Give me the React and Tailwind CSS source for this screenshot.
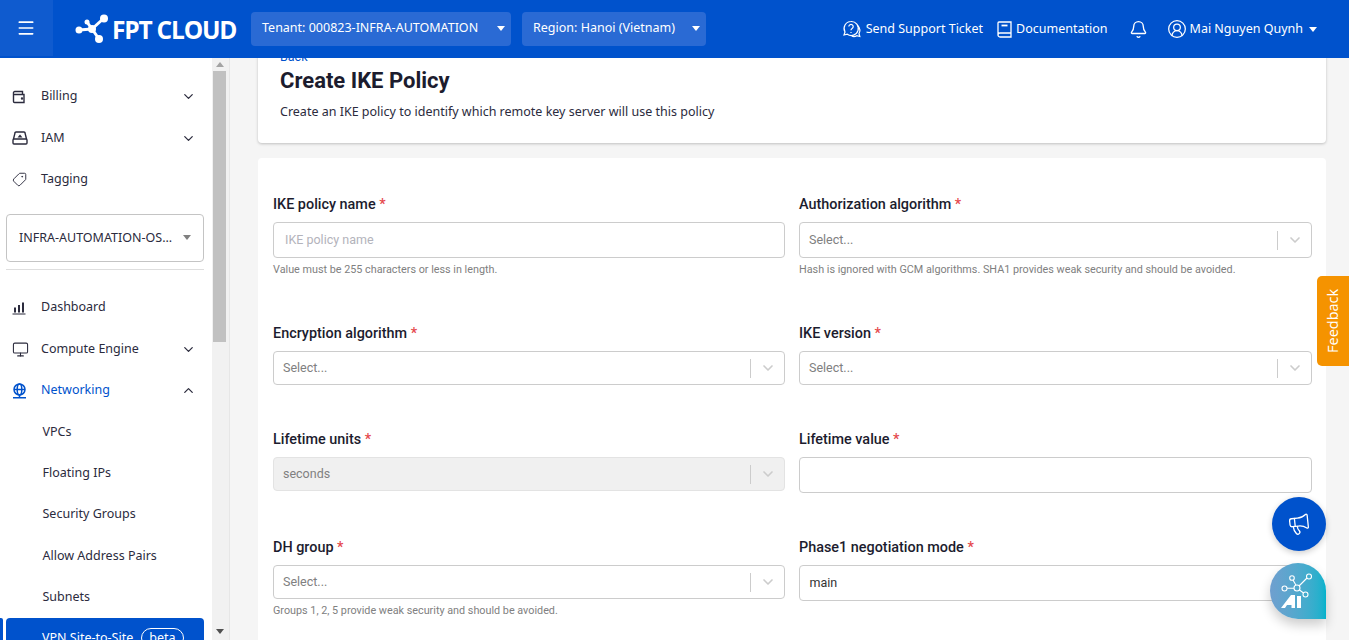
import React from 'react';
import { ChevronDown, ChevronUp, Tag, Monitor, Bell, CircleUserRound, Menu, Megaphone } from 'lucide-react';

const Logo = () => (
  <svg width="34" height="30" viewBox="0 0 34 30" fill="none" className="shrink-0">
    <g stroke="#fff" strokeWidth="3">
      <path d="M17 15 L28 5" />
      <path d="M17 15 L24 25" />
      <path d="M4 16 L17 15" />
      <path d="M17 15 L12 8" />
    </g>
    <circle cx="17" cy="15" r="4" fill="#fff" />
    <circle cx="29" cy="4.500" r="4" fill="#fff" />
    <circle cx="24" cy="25" r="4" fill="#fff" />
    <circle cx="4" cy="16" r="3.500" fill="#fff" />
    <circle cx="12" cy="8" r="2.500" fill="#fff" />
  </svg>
);

const Caret = ({ className = 'border-t-white' }) => (
  <span className={`w-0 h-0 border-x-[4px] border-x-transparent border-t-[5px] ${className}`} />
);

const WalletIcon = () => (
  <svg width="14" height="14" viewBox="0 0 14 14" fill="none" stroke="#2b2b3d" strokeWidth="1.400">
    <path d="M1.500 3.500V11.500a1 1 0 0 0 1 1h9.500V4.500H2.500a1 1 0 0 1-1-1Zm0 0a1.500 1.500 0 0 1 1.500-2h7.500v3" />
    <circle cx="10" cy="8.500" r=".5" fill="#2b2b3d" />
  </svg>
);

const DriveIcon = () => (
  <svg width="16" height="14" viewBox="0 0 16 14" fill="none" stroke="#2b2b3d" strokeWidth="1.400">
    <rect x="1" y="8" width="14" height="5" rx="1" />
    <path d="M1.500 8 3 2a1 1 0 0 1 1-1h8a1 1 0 0 1 1 1l1.500 6" />
    <path d="M5.500 6.500 8 3.500l2.500 3Z" fill="#2b2b3d" stroke="none" />
  </svg>
);

const ChartIcon = () => (
  <svg width="14" height="14" viewBox="0 0 14 14" fill="#2b2b3d">
    <rect x="2" y="6.500" width="2" height="5" />
    <rect x="6" y="4" width="2" height="7.500" />
    <rect x="10" y="1.500" width="2" height="10" />
    <rect x="0.500" y="12.500" width="13" height="1" />
  </svg>
);

const GlobeIcon = () => (
  <svg width="15" height="16" viewBox="0 0 15 16" fill="none" stroke="#0052cc" strokeWidth="1.500">
    <circle cx="7.500" cy="6.500" r="5.500" />
    <ellipse cx="7.500" cy="6.500" rx="2.300" ry="5.500" />
    <path d="M2 6.500h11M7.500 12v2.500M1 14.800h13" />
  </svg>
);

const TicketIcon = () => (
  <svg width="19" height="18" viewBox="0 0 19 18" fill="none" stroke="#fff" strokeWidth="1.200">
    <path d="M9 1.500a7 7 0 0 0-6 10.500l-1 3 3.300-.8A7 7 0 1 0 9 1.500Z" />
    <path d="M15.500 5.500a6.500 6.500 0 0 1 1.500 8l.8 3-3-.8a6 6 0 0 1-5 .500" />
    <path d="M6.800 6.500a2.200 2.200 0 1 1 3.300 2c-.8.500-1.100.9-1.100 1.800M9 12v1" />
  </svg>
);

const BookIcon = () => (
  <svg width="15" height="17" viewBox="0 0 15 17" fill="none" stroke="#fff" strokeWidth="1.300">
    <path d="M1 14V2a1 1 0 0 1 1-1h12v15H3a2 2 0 0 1-2-2Zm0 0a2 2 0 0 1 2-2h11" />
    <path d="M4.500 4.500h6" strokeWidth="1.800" />
  </svg>
);

const AiIcon = () => (
  <svg width="34" height="38" viewBox="0 0 34 38" fill="none">
    <g stroke="#fff" strokeWidth="1.100">
      <circle cx="16" cy="16" r="3" />
      <circle cx="11" cy="6" r="2.300" />
      <circle cx="28" cy="4.500" r="2.500" />
      <circle cx="3.500" cy="16.500" r="2.500" />
      <circle cx="24.500" cy="22.500" r="2.500" />
      <path d="M12 8l3 5.200M26 6l-8 8M6 16.300h7M18.500 18l4 3" />
    </g>
    <path d="M0 36 10 23h4v13h-3.500v-3H6l-2 3Z" fill="#fff" />
    <rect x="16" y="24" width="4" height="12" fill="#fff" />
  </svg>
);

const NavRow = ({ icon, label, chevron, active }) => (
  <div className="flex items-center h-[41.500px] pl-[12px] pr-[16px]">
    <span className="w-[29px] shrink-0 flex items-center">{icon}</span>
    <span className={`flex-1 text-[12.500px] ${active ? 'text-[#0052cc]' : 'text-[#2b2b3d]'}`}>{label}</span>
    {chevron === 'down' && <ChevronDown size={15} strokeWidth={2} className="text-[#2b2b3d]" />}
    {chevron === 'up' && <ChevronUp size={15} strokeWidth={2} className="text-[#2b2b3d]" />}
  </div>
);

const SubRow = ({ label }) => (
  <div className="flex items-center h-[41.300px] pl-[42.500px] text-[12.500px] text-[#2b2b3d]">{label}</div>
);

const Label = ({ children }) => (
  <div className="text-[14.400px] font-medium leading-[16px] text-[#1c1c2e] font-['Roboto',sans-serif]">
    {children} <span className="text-[#e5484d]">*</span>
  </div>
);

const Hint = ({ children, className = 'mt-[6px]' }) => (
  <div className={`${className} text-[10.800px] leading-[12px] text-[#808080] font-['Roboto',sans-serif]`}>{children}</div>
);

const SelectBox = ({ placeholder = 'Select...', disabled, tall }) => (
  <div className={`mt-[9px] ${tall ? 'h-[36px]' : 'h-[34px]'} border rounded-[4px] flex items-center pl-[9px] ${disabled ? 'bg-[#f0f0f0] border-[#e3e3e3]' : 'bg-white border-[#cccccc]'}`}>
    <span className="flex-1 text-[12.500px] text-[#808080] font-['Roboto',sans-serif]">{placeholder}</span>
    <span className="w-px h-[19px] bg-[#cccccc]" />
    <span className="w-[33px] flex justify-center">
      <ChevronDown size={16} strokeWidth={2.500} className="text-[#cccccc]" />
    </span>
  </div>
);

const TextBox = ({ placeholder, value }) => (
  <div className="mt-[9px] h-[36px] border border-[#cccccc] rounded-[4px] bg-white flex items-center pl-[9.500px] pr-[11px] text-[12.500px] font-['Roboto',sans-serif]">
    {placeholder && <span className="pl-[1.500px] text-[#b3b3bb]">{placeholder}</span>}
    {value && <span className="text-[#333]">{value}</span>}
  </div>
);

export default function App() {
  return (
    <div className="relative w-[1349px] h-[640px] overflow-hidden flex flex-col bg-[#f5f5f5] font-['Noto_Sans',sans-serif]">
      <header className="relative z-10 h-[58px] shrink-0 bg-[#0052cc] flex items-center text-white">
        <div className="w-[53px] h-[56px] mb-[2px] pr-[1px] bg-[#0f5bcf] flex items-center justify-center">
          <Menu size={20} strokeWidth={2} />
        </div>
        <div className="ml-[22px] w-[162px] flex items-center">
          <Logo />
          <span className="ml-[3px] mt-[2px] text-[24.500px] font-bold tracking-[-1.200px] whitespace-nowrap leading-none font-['Open_Sans',sans-serif]">FPT CLOUD</span>
        </div>
        <div className="ml-[14px] w-[260px] h-[34px] rounded-[4px] bg-[#2a6ad4] flex items-center pl-[11px] pr-[6px] pb-[2px] text-[12.500px]">
          <span className="flex-1">Tenant: 000823-INFRA-AUTOMATION</span>
          <Caret />
        </div>
        <div className="ml-[11px] w-[184px] h-[34px] rounded-[4px] bg-[#2a6ad4] flex items-center pl-[11px] pr-[6px] pb-[2px] text-[12.500px]">
          <span className="flex-1">Region: Hanoi (Vietnam)</span>
          <Caret />
        </div>
        <div className="ml-auto flex items-center text-[12.500px] pr-[32px]">
          <TicketIcon />
          <span className="ml-[5px]">Send Support Ticket</span>
          <span className="ml-[14px]"><BookIcon /></span>
          <span className="ml-[4px]">Documentation</span>
          <Bell size={19} strokeWidth={1.700} className="ml-[21px]" />
          <CircleUserRound size={20} strokeWidth={1.500} className="ml-[19px]" />
          <span className="ml-[3px]">Mai Nguyen Quynh</span>
          <span className="ml-[6px] flex"><Caret /></span>
        </div>
      </header>

      <div className="flex-1 min-h-0 flex">
        <aside className="w-[212px] shrink-0 bg-white pt-[18px] overflow-hidden">
          <NavRow icon={<WalletIcon />} label="Billing" chevron="down" />
          <NavRow icon={<DriveIcon />} label="IAM" chevron="down" />
          <NavRow icon={<Tag size={15} strokeWidth={1.500} className="text-[#2b2b3d] -scale-x-100" />} label="Tagging" />
          <div className="ml-[6px] mr-[8px] mt-[13px] h-[48px] rounded-[4px] border border-[#c4c4c4] flex items-center pl-[12px] pr-[12px]">
            <span className="flex-1 pt-[2px] text-[12.500px] text-[#2b2b3d]">INFRA-AUTOMATION-OS...</span>
            <Caret className="border-t-[#808080]" />
          </div>
          <div className="ml-[6px] mr-[8px] mt-[7px] mb-[17.500px] h-px bg-[#dedede]" />
          <NavRow icon={<ChartIcon />} label="Dashboard" />
          <NavRow icon={<Monitor size={17} strokeWidth={1.500} className="text-[#2b2b3d]" />} label="Compute Engine" chevron="down" />
          <NavRow icon={<GlobeIcon />} label="Networking" chevron="up" active />
          <SubRow label="VPCs" />
          <SubRow label="Floating IPs" />
          <SubRow label="Security Groups" />
          <SubRow label="Allow Address Pairs" />
          <SubRow label="Subnets" />
          <div className="relative ml-[6px] mr-[8px] h-[40px] rounded-[4px] bg-[#0052cc] flex items-center pl-[36px] text-[12.500px] text-white">
            <span className="absolute left-[-6px] top-0 w-[3px] h-full rounded-r-[2px] bg-[#0052cc]" />
            <span>VPN Site-to-Site</span>
            <span className="ml-[8px] px-[7px] h-[20px] rounded-full border border-white flex items-center leading-none">beta</span>
          </div>
        </aside>

        <div className="w-[17px] shrink-0 bg-[#f1f1f1] flex flex-col items-center">
          <div className="h-[13px] mr-[2px] flex items-center justify-center">
            <span className="w-0 h-0 border-x-[4px] border-x-transparent border-b-[5px] border-b-[#a3a3a3]" />
          </div>
          <div className="w-[13px] h-[271px] bg-[#c1c1c1] mr-[2px]" />
          <div className="mt-auto mr-[2px] h-[17px] flex items-center justify-center">
            <Caret className="border-t-[#505050]" />
          </div>
        </div>

        <main className="flex-1 min-w-0 border-l border-[#e6e6e6] pl-[28px] pr-[23px] overflow-hidden">
          <section className="-mt-[40px] h-[125px] bg-white rounded-[4px] shadow-[0_1px_3px_rgba(0,0,0,0.22)] px-[22px] pt-[31px] font-['Roboto',sans-serif]">
            <div className="text-[12.500px] leading-[15px] text-[#0052cc]">Back</div>
            <h1 className="mt-[3px] text-[22px] leading-[28px] font-bold text-[#1c1c2e]">Create IKE Policy</h1>
            <p className="mt-[8px] text-[12.500px] leading-[18px] text-[#2b2b3d] font-['Noto_Sans',sans-serif]">Create an IKE policy to identify which remote key server will use this policy</p>
          </section>

          <section className="mt-[15px] bg-white rounded-[4px] pl-[15px] pr-[14px] pt-[39px] h-[600px] grid grid-cols-[512px_513px] gap-x-[14px] content-start">
            <div className="h-[129px]">
              <Label>IKE policy name</Label>
              <TextBox placeholder="IKE policy name" />
              <Hint>Value must be 255 characters or less in length.</Hint>
            </div>
            <div className="h-[129px]">
              <Label>Authorization algorithm</Label>
              <SelectBox tall />
              <Hint>Hash is ignored with GCM algorithms. SHA1 provides weak security and should be avoided.</Hint>
            </div>
            <div className="h-[106px]">
              <Label>Encryption algorithm</Label>
              <SelectBox />
            </div>
            <div className="h-[106px]">
              <Label>IKE version</Label>
              <SelectBox />
            </div>
            <div className="h-[108px]">
              <Label>Lifetime units</Label>
              <SelectBox placeholder="seconds" disabled />
            </div>
            <div className="h-[108px]">
              <Label>Lifetime value</Label>
              <TextBox />
            </div>
            <div>
              <Label>DH group</Label>
              <SelectBox />
              <Hint>Groups 1, 2, 5 provide weak security and should be avoided.</Hint>
            </div>
            <div>
              <Label>Phase1 negotiation mode</Label>
              <TextBox value="main" />
            </div>
          </section>
        </main>
      </div>

      <div className="absolute right-0 top-[276px] w-[32px] h-[90px] bg-[#f59300] rounded-l-[5px] flex items-center justify-center">
        <span className="-rotate-90 whitespace-nowrap text-[14.500px] text-white font-['Open_Sans',sans-serif]">Feedback</span>
      </div>
      <div className="absolute left-[1272px] top-[497px] w-[54px] h-[54px] rounded-full bg-[#0052cc] flex items-center justify-center shadow-[0_2px_6px_rgba(0,0,0,0.2)]">
        <Megaphone size={24} strokeWidth={1.300} className="text-white -rotate-6" />
      </div>
      <div className="absolute left-[1270px] top-[563px] w-[56px] h-[56px] rounded-t-full rounded-bl-full bg-gradient-to-r from-[#6f9fcf] to-[#00b2cc] flex items-center justify-center shadow-[0_6px_12px_rgba(0,0,0,0.2)]">
        <AiIcon />
      </div>
    </div>
  );
}
